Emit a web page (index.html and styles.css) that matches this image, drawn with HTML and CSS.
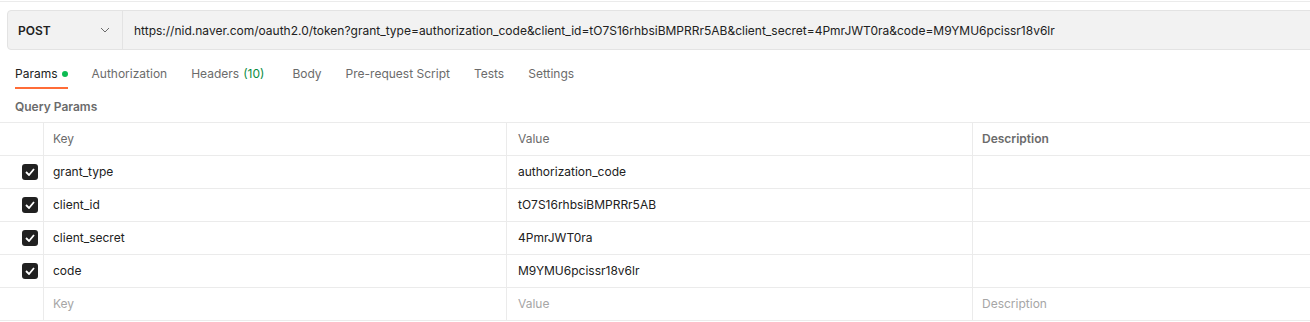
FILE: index.html
```html
<!DOCTYPE html>
<html>
<head>
<meta charset="utf-8">
<link rel="stylesheet" href="styles.css">
</head>
<body>
<div class="topline"></div>
<div class="reqbar">
  <div class="method">
    <span class="method-name">POST</span>
    <svg class="chev" width="10" height="6" viewBox="0 0 10 6"><path d="M1 1 L5 5 L9 1" fill="none" stroke="#6b6b6b" stroke-width="1"/></svg>
  </div>
  <div class="url">https://nid.naver.com/oauth2.0/token?grant_type=authorization_code&amp;client_id=tO7S16rhbsiBMPRRr5AB&amp;client_secret=4PmrJWT0ra&amp;code=M9YMU6pcissr18v6lr</div>
</div>
<div class="tabs">
  <div class="tab active">Params<span class="dot"></span></div>
  <div class="tab">Authorization</div>
  <div class="tab tab-headers">Headers <span class="count">(10)</span></div>
  <div class="tab">Body</div>
  <div class="tab">Pre-request Script</div>
  <div class="tab">Tests</div>
  <div class="tab">Settings</div>
</div>
<div class="section-title">Query Params</div>
<div class="table">
  <div class="row head">
    <div class="cell c1"></div>
    <div class="cell c2">Key</div>
    <div class="cell c3">Value</div>
    <div class="cell c4 desc">Description</div>
  </div>
  <div class="row">
    <div class="cell c1"><span class="cb"><svg width="10" height="8" viewBox="0 0 10 8"><path d="M1 4 L4 7 L9 1" fill="none" stroke="#fff" stroke-width="1.8"/></svg></span></div>
    <div class="cell c2">grant_type</div>
    <div class="cell c3">authorization_code</div>
    <div class="cell c4"></div>
  </div>
  <div class="row">
    <div class="cell c1"><span class="cb"><svg width="10" height="8" viewBox="0 0 10 8"><path d="M1 4 L4 7 L9 1" fill="none" stroke="#fff" stroke-width="1.8"/></svg></span></div>
    <div class="cell c2">client_id</div>
    <div class="cell c3">tO7S16rhbsiBMPRRr5AB</div>
    <div class="cell c4"></div>
  </div>
  <div class="row">
    <div class="cell c1"><span class="cb"><svg width="10" height="8" viewBox="0 0 10 8"><path d="M1 4 L4 7 L9 1" fill="none" stroke="#fff" stroke-width="1.8"/></svg></span></div>
    <div class="cell c2">client_secret</div>
    <div class="cell c3">4PmrJWT0ra</div>
    <div class="cell c4"></div>
  </div>
  <div class="row">
    <div class="cell c1"><span class="cb"><svg width="10" height="8" viewBox="0 0 10 8"><path d="M1 4 L4 7 L9 1" fill="none" stroke="#fff" stroke-width="1.8"/></svg></span></div>
    <div class="cell c2">code</div>
    <div class="cell c3">M9YMU6pcissr18v6lr</div>
    <div class="cell c4"></div>
  </div>
  <div class="row ph">
    <div class="cell c1"></div>
    <div class="cell c2">Key</div>
    <div class="cell c3">Value</div>
    <div class="cell c4">Description</div>
  </div>
</div>
</body>
</html>
```
FILE: styles.css
```css
* { box-sizing: border-box; }
html, body { margin: 0; padding: 0; background: #fff; overflow: hidden; }
body {
  font-family: Inter, "Noto Sans", sans-serif;
  font-size: 12px;
  color: #212121;
  width: 1310px;
}
.topline { height: 1px; margin-top: 1px; background: #ebebeb; }
.reqbar {
  display: flex;
  margin: 8px -10px 0 7px;
  height: 40px;
  background: #f2f2f2;
  border: 1px solid #e3e3e3;
  border-radius: 4px;
}
.method {
  width: 115px;
  flex: none;
  display: flex;
  align-items: center;
  justify-content: space-between;
  padding: 0 12px 0 10px;
  border-right: 1px solid #e3e3e3;
}
.method-name { font-weight: 600; font-size: 12px; color: #212121; }
.chev { display: block; }
.url {
  display: flex;
  align-items: center;
  padding-left: 11px;
  font-size: 12px;
  color: #212121;
  white-space: nowrap;
}
.tabs {
  display: flex;
  margin-top: 12px;
  padding-left: 15px;
  height: 28px;
}
.tab {
  color: #6b6b6b;
  font-size: 12px;
  line-height: 24px;
  margin-right: 24px;
  display: flex;
  align-items: flex-start;
}
.tab.tab-headers { margin-right: 28px; }
.tab.active { color: #212121; border-bottom: 2px solid #ff6c37; height: 27px; }
.dot {
  width: 6px; height: 6px; border-radius: 50%;
  background: #0cbb52;
  margin: 9px 0 0 4px;
}
.count { color: #0a8c3f; margin-left: 4px; }
.section-title {
  margin: 7px 0 0 15px;
  font-size: 12px;
  font-weight: 600;
  color: #6b6b6b;
  line-height: 20px;
}
.table { margin-top: 5px; border-top: 1px solid #ebebeb; }
.row {
  display: grid;
  grid-template-columns: 43px 463px 466px 1fr;
  height: 33px;
  border-bottom: 1px solid #ebebeb;
}
.cell {
  display: flex;
  align-items: center;
  padding: 0 0 1px 9px;
  white-space: nowrap;
}
.c2, .c3, .c4 { border-left: 1px solid #ebebeb; }
.c3 { padding-left: 11px; }
.c1 { justify-content: flex-end; padding: 0 5px 0 0; }
.head .cell { color: #6b6b6b; }
.head .desc { font-weight: 600; }
.ph .cell { color: #a6a6a6; }
.cb {
  width: 16px; height: 16px;
  border-radius: 3px;
  background: #212121;
  display: flex;
  align-items: center;
  justify-content: center;
}
.cb svg { display: block; }
```
